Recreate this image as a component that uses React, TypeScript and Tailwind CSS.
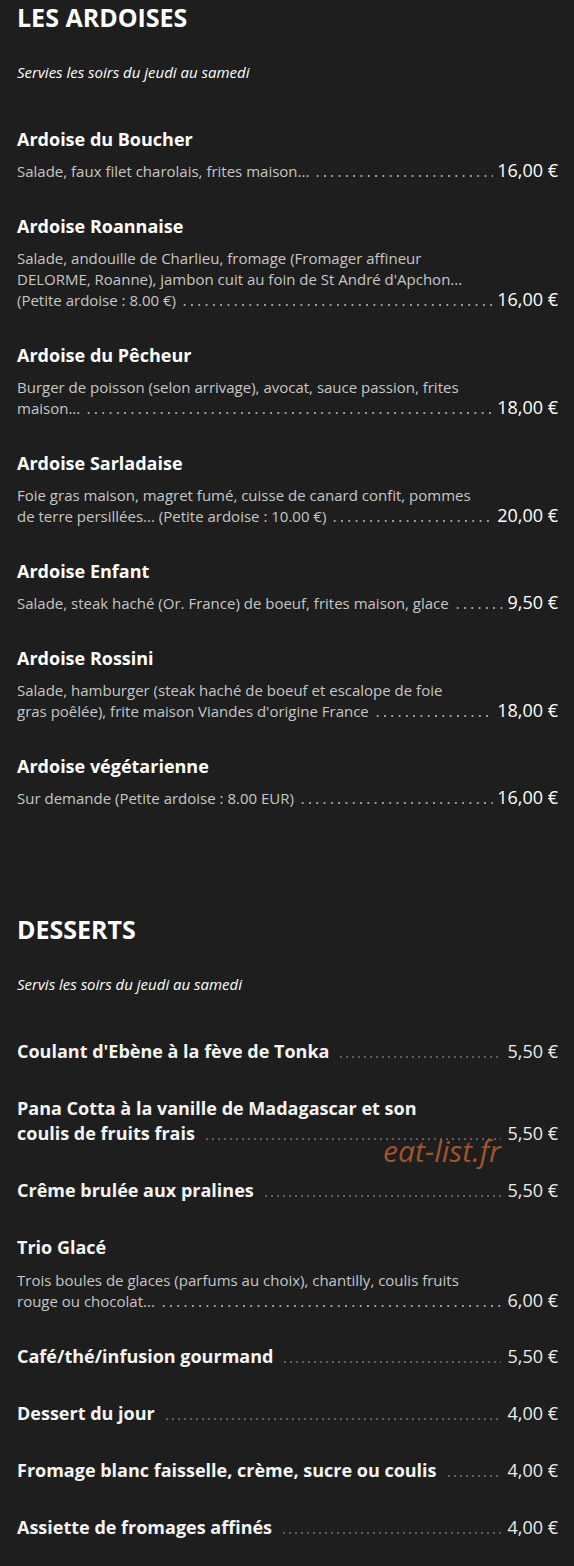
type Ardoise = { name: string; desc: string; price: string; wide?: boolean }
type Dessert = { name: string; desc?: string; price: string }

const ardoises: Ardoise[] = [
  { name: "Ardoise du Boucher", desc: "Salade, faux filet charolais, frites maison...", price: "16,00 €" },
  {
    name: "Ardoise Roannaise",
    desc: "Salade, andouille de Charlieu, fromage (Fromager affineur DELORME, Roanne), jambon cuit au foin de St André d'Apchon... (Petite ardoise : 8.00 €)",
    price: "16,00 €",
  },
  {
    name: "Ardoise du Pêcheur",
    desc: "Burger de poisson (selon arrivage), avocat, sauce passion, frites maison...",
    price: "18,00 €",
  },
  {
    name: "Ardoise Sarladaise",
    desc: "Foie gras maison, magret fumé, cuisse de canard confit, pommes de terre persillées... (Petite ardoise : 10.00 €)",
    price: "20,00 €",
    wide: true,
  },
  { name: "Ardoise Enfant", desc: "Salade, steak haché (Or. France) de boeuf, frites maison, glace", price: "9,50 €" },
  {
    name: "Ardoise Rossini",
    desc: "Salade, hamburger (steak haché de boeuf et escalope de foie gras poêlée), frite maison Viandes d'origine France",
    price: "18,00 €",
  },
  { name: "Ardoise végétarienne", desc: "Sur demande (Petite ardoise : 8.00 EUR)", price: "16,00 €" },
]

const desserts: Dessert[] = [
  { name: "Coulant d'Ebène à la fève de Tonka", price: "5,50 €" },
  { name: "Pana Cotta à la vanille de Madagascar et son coulis de fruits frais", price: "5,50 €" },
  { name: "Crême brulée aux pralines", price: "5,50 €" },
  {
    name: "Trio Glacé",
    desc: "Trois boules de glaces (parfums au choix), chantilly, coulis fruits rouge ou chocolat...",
    price: "6,00 €",
  },
  { name: "Café/thé/infusion gourmand", price: "5,50 €" },
  { name: "Dessert du jour", price: "4,00 €" },
  { name: "Fromage blanc faisselle, crème, sucre ou coulis", price: "4,00 €" },
  { name: "Assiette de fromages affinés", price: "4,00 €" },
]

// description text, then a dotted leader running from the end of its last line up to the price
const DescLine = ({
  desc,
  price,
  priceClass,
  wide,
}: {
  desc: string
  price: string
  priceClass: string
  wide?: boolean
}) => (
  <div className="flex items-end">
    <div className="min-w-0 flex-1 overflow-hidden">
      <p
        className={
          wide
            ? "max-w-[466px] text-[15px] leading-[21px] text-[#c6c6c6]"
            : "max-w-[452px] text-[15px] leading-[21px] text-[#c6c6c6]"
        }
      >
        {desc}
        <span className="relative">
          <span className="absolute left-[5px] top-[13px] h-[4px] w-[600px] bg-[radial-gradient(circle,#a0a0a0_0.8px,transparent_1.1px)] bg-[length:7.3px_4px] bg-repeat-x" />
        </span>
      </p>
    </div>
    <span className={priceClass}>{price}</span>
  </div>
)

const SectionHead = ({ title, subtitle }: { title: string; subtitle: string }) => (
  <div>
    <h2 className="text-[25px] leading-[32px] font-bold text-white">{title}</h2>
    <p className="mt-[29px] text-[15px] leading-[20px] italic text-white">{subtitle}</p>
  </div>
)

const App = () => {
  return (
    <div className="relative min-h-screen bg-[#1e1e1e] pt-[1px] pb-[25px] pl-[17px] pr-[16px] font-['Open_Sans',sans-serif]">
      <SectionHead title="LES ARDOISES" subtitle="Servies les soirs du jeudi au samedi" />

      <div className="mt-[45px] flex flex-col gap-[32px]">
        {ardoises.map((a) => (
          <div key={a.name}>
            <h3 className="text-[18px] leading-[24px] font-bold text-white">{a.name}</h3>
            <div className="mt-[10px]">
              <DescLine
                desc={a.desc}
                price={a.price}
                wide={a.wide}
                priceClass="mb-[2px] ml-[4px] shrink-0 text-[18px] leading-[19px] text-white"
              />
            </div>
          </div>
        ))}
      </div>

      <div className="mt-[104px]">
        <SectionHead title="DESSERTS" subtitle="Servis les soirs du jeudi au samedi" />
      </div>

      <div className="mt-[45px] flex flex-col gap-[32px]">
        {desserts.map((d) =>
          d.desc ? (
            <div key={d.name}>
              <h3 className="text-[18px] leading-[25px] font-bold text-[#f4f4f4]">{d.name}</h3>
              <div className="mt-[10px]">
                <DescLine
                  desc={d.desc}
                  price={d.price}
                  priceClass="mb-[2px] ml-[6px] shrink-0 text-[18px] leading-[19px] text-[#ececec]"
                />
              </div>
            </div>
          ) : (
            <div key={d.name} className="flex items-end">
              <div className="min-w-0 flex-1 overflow-hidden">
                <p className="max-w-[433px] text-[18px] leading-[25px] font-bold text-[#f4f4f4]">
                  {d.name}
                  <span className="relative">
                    <span className="absolute left-[9px] top-[16px] h-[4px] w-[600px] bg-[radial-gradient(circle,#808080_0.6px,transparent_0.9px)] bg-[length:6px_4px] bg-repeat-x" />
                  </span>
                </p>
              </div>
              <span className="ml-[6px] shrink-0 text-[18px] leading-[25px] text-[#ececec]">{d.price}</span>
            </div>
          )
        )}
      </div>

      {/* watermark */}
      <div className="absolute left-[383px] top-[1136px] text-[30px] leading-[30px] italic text-[#a0532c]">
        eat-list.fr
      </div>
    </div>
  )
}

export default App
